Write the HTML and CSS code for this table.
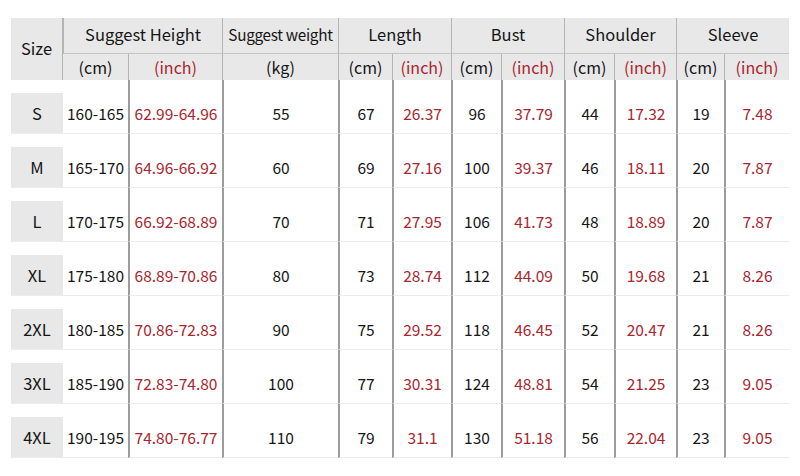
FILE: index.html
```html
<!DOCTYPE html>
<html>
<head>
<meta charset="utf-8">
<link rel="stylesheet" href="styles.css">
</head>
<body>
<table class="chart">
  <colgroup>
    <col class="c-size">
    <col class="c-hcm"><col class="c-hin">
    <col class="c-w">
    <col class="c-lcm"><col class="c-lin">
    <col class="c-bcm"><col class="c-bin">
    <col class="c-scm"><col class="c-sin">
    <col class="c-vcm"><col class="c-vin">
  </colgroup>
  <thead>
    <tr class="h1">
      <th rowspan="2" class="size-h">Size</th>
      <th colspan="2" class="grp">Suggest Height</th>
      <th class="grp weight">Suggest weight</th>
      <th colspan="2" class="grp">Length</th>
      <th colspan="2" class="grp">Bust</th>
      <th colspan="2" class="grp">Shoulder</th>
      <th colspan="2" class="grp">Sleeve</th>
    </tr>
    <tr class="h2">
      <th class="grp-start">(cm)</th><th class="in sep">(inch)</th>
      <th class="grp-start">(kg)</th>
      <th class="grp-start">(cm)</th><th class="in sep">(inch)</th>
      <th class="grp-start">(cm)</th><th class="in sep">(inch)</th>
      <th class="grp-start">(cm)</th><th class="in sep">(inch)</th>
      <th class="grp-start">(cm)</th><th class="in sep">(inch)</th>
    </tr>
  </thead>
  <tbody>
    <tr><td class="size"><div>S</div></td><td><div>160-165</div></td><td class="in sep"><div>62.99-64.96</div></td><td class="sep"><div>55</div></td><td class="sep"><div>67</div></td><td class="in sep"><div>26.37</div></td><td class="sep"><div>96</div></td><td class="in sep"><div>37.79</div></td><td class="sep"><div>44</div></td><td class="in sep"><div>17.32</div></td><td class="sep"><div>19</div></td><td class="in sep"><div>7.48</div></td></tr>
    <tr><td class="size"><div>M</div></td><td><div>165-170</div></td><td class="in sep"><div>64.96-66.92</div></td><td class="sep"><div>60</div></td><td class="sep"><div>69</div></td><td class="in sep"><div>27.16</div></td><td class="sep"><div>100</div></td><td class="in sep"><div>39.37</div></td><td class="sep"><div>46</div></td><td class="in sep"><div>18.11</div></td><td class="sep"><div>20</div></td><td class="in sep"><div>7.87</div></td></tr>
    <tr><td class="size"><div>L</div></td><td><div>170-175</div></td><td class="in sep"><div>66.92-68.89</div></td><td class="sep"><div>70</div></td><td class="sep"><div>71</div></td><td class="in sep"><div>27.95</div></td><td class="sep"><div>106</div></td><td class="in sep"><div>41.73</div></td><td class="sep"><div>48</div></td><td class="in sep"><div>18.89</div></td><td class="sep"><div>20</div></td><td class="in sep"><div>7.87</div></td></tr>
    <tr><td class="size"><div>XL</div></td><td><div>175-180</div></td><td class="in sep"><div>68.89-70.86</div></td><td class="sep"><div>80</div></td><td class="sep"><div>73</div></td><td class="in sep"><div>28.74</div></td><td class="sep"><div>112</div></td><td class="in sep"><div>44.09</div></td><td class="sep"><div>50</div></td><td class="in sep"><div>19.68</div></td><td class="sep"><div>21</div></td><td class="in sep"><div>8.26</div></td></tr>
    <tr><td class="size"><div>2XL</div></td><td><div>180-185</div></td><td class="in sep"><div>70.86-72.83</div></td><td class="sep"><div>90</div></td><td class="sep"><div>75</div></td><td class="in sep"><div>29.52</div></td><td class="sep"><div>118</div></td><td class="in sep"><div>46.45</div></td><td class="sep"><div>52</div></td><td class="in sep"><div>20.47</div></td><td class="sep"><div>21</div></td><td class="in sep"><div>8.26</div></td></tr>
    <tr><td class="size"><div>3XL</div></td><td><div>185-190</div></td><td class="in sep"><div>72.83-74.80</div></td><td class="sep"><div>100</div></td><td class="sep"><div>77</div></td><td class="in sep"><div>30.31</div></td><td class="sep"><div>124</div></td><td class="in sep"><div>48.81</div></td><td class="sep"><div>54</div></td><td class="in sep"><div>21.25</div></td><td class="sep"><div>23</div></td><td class="in sep"><div>9.05</div></td></tr>
    <tr><td class="size"><div>4XL</div></td><td><div>190-195</div></td><td class="in sep"><div>74.80-76.77</div></td><td class="sep"><div>110</div></td><td class="sep"><div>79</div></td><td class="in sep"><div>31.1</div></td><td class="sep"><div>130</div></td><td class="in sep"><div>51.18</div></td><td class="sep"><div>56</div></td><td class="in sep"><div>22.04</div></td><td class="sep"><div>23</div></td><td class="in sep"><div>9.05</div></td></tr>
  </tbody>
</table>
</body>
</html>
```
FILE: styles.css
```css
html, body {
  margin: 0;
  padding: 0;
  background: #ffffff;
}
body {
  padding: 18px 0 0 11px;
  font-family: "Noto Sans CJK SC", "Noto Sans", sans-serif;
  color: #151515;
}
.chart {
  border-collapse: separate;
  border-spacing: 0;
  table-layout: fixed;
  width: 778px;
}
.c-size { width: 52px; }
.c-hcm { width: 65px; }
.c-hin { width: 94px; }
.c-w { width: 116px; }
.c-lcm { width: 54px; }
.c-lin { width: 59px; }
.c-bcm { width: 50px; }
.c-bin { width: 63px; }
.c-scm { width: 50px; }
.c-sin { width: 62px; }
.c-vcm { width: 48px; }
.c-vin { width: 65px; }

th {
  background: #e8e8e8;
  font-weight: 400;
  padding: 0;
  text-align: center;
  white-space: nowrap;
}
.h1 th {
  height: 32px;
  font-size: 16.5px;
  line-height: 20px;
  padding-bottom: 3px;
  border-bottom: 1px solid #c4c4c4;
}
.h1 th.grp {
  border-left: 1px solid #b4b4b4;
}
.h1 th.weight {
  font-size: 15.3px;
  letter-spacing: -0.3px;
}
.h1 th.size-h {
  border-bottom: none;
  border-right: 1px solid #b4b4b4;
  font-size: 16.5px;
  padding-bottom: 2px;
}
.h2 th {
  height: 26px;
  font-size: 16px;
  line-height: 20px;
  vertical-align: middle;
}
.h2 th.grp-start {
  border-left: 1px solid #b4b4b4;
}
.h2 th:first-child {
  border-left: none;
}
.h2 th.sep {
  border-left: 1px solid #b4b4b4;
}
.in {
  color: #a8262e;
}
td {
  padding: 0;
  text-align: center;
  font-size: 15.5px;
  border-bottom: 1px solid #ececec;
  white-space: nowrap;
}
td > div {
  margin-top: 13px;
  height: 40px;
  line-height: 40px;
}
td.sep {
  border-left: 2px solid #9c9c9c;
}
td.size > div {
  background: #e8e8e8;
  font-size: 16.5px;
}
```
